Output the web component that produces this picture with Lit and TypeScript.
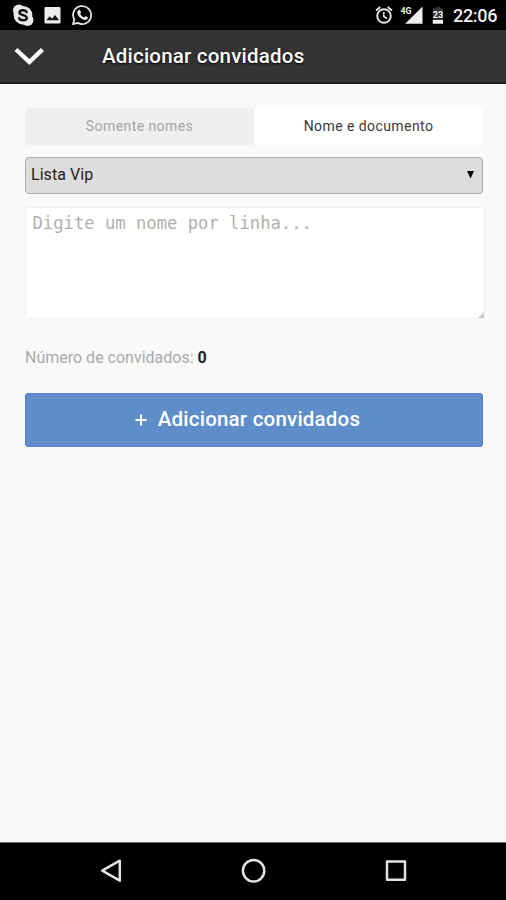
import { LitElement, html, css, svg } from "lit";
import { customElement, state } from "lit/decorators.js";
import { classMap } from "lit/directives/class-map.js";

@customElement("status-bar")
class StatusBar extends LitElement {
  static styles = css`
    :host { display: flex; height: 30px; box-sizing: border-box; background: #000; color: #eee; align-items: center; padding: 0 9px 0 12px; font-family: Roboto, sans-serif; }
    svg { display: block; flex: none; }
    .skype { margin-right: 10px; }
    .photo { margin-right: 11px; }
    .fill { flex: 1; }
    .alarm { margin-right: 7px; }
    .signal { margin-right: 9px; }
    .battery { margin-right: 9px; }
    .net { font: 700 9px Roboto, sans-serif; }
    .level { font: 700 9px Roboto, sans-serif; }
    .time { font-size: 18px; font-weight: 500; line-height: 30px; width: 44px; letter-spacing: -0.3px; white-space: nowrap; padding-top: 1px; }
  `;
  render() {
    return html`
      <svg class="skype" width="22" height="24" viewBox="0 0 22 24">
        <circle cx="7" cy="7.5" r="6" fill="#e8e8e8" /><circle cx="15.5" cy="17" r="6" fill="#e8e8e8" />
        <circle cx="11" cy="12.2" r="9.3" fill="#e8e8e8" />
        <path d="M14.6 9.2C13.8 6.6 7.5 6.5 7.5 9.5C7.5 12.7 14.8 11.6 14.8 15C14.8 18.1 8 18 7.2 15.2" fill="none" stroke="#111" stroke-width="2.4" stroke-linecap="round" />
      </svg>
      <svg class="photo" width="17" height="24" viewBox="0 0 17 24">
        <rect x="0.5" y="4" width="16" height="16.5" rx="1.2" fill="#eee" />
        <path d="M2.5 17.3L5.6 13.3L8 15.8L11 12L15 17.3Z" fill="#111" />
      </svg>
      <svg width="21" height="24" viewBox="0 0 21 24">
        <path d="M1 21.2L2.3 16.5A9 9 0 1 1 5.7 19.9Z" fill="none" stroke="#e4e4e4" stroke-width="1.8" stroke-linejoin="round" />
        <path d="M6.1 7.4C7.1 6.5 8 6.8 8.4 7.7L9 9.3C9.1 9.8 8.8 10.2 8.2 10.8C9 12.5 10.2 13.7 12 14.4L13.1 13.2C13.5 12.9 16 14 16 14.5C16 16.5 13.7 17.4 11.8 16.8C8.6 15.8 6.5 13.8 5.5 11C5 9.5 5.2 8.2 6.1 7.4Z" fill="#e8e8e8" />
      </svg>
      <div class="fill"></div>
      <svg class="alarm" width="18" height="24" viewBox="0 0 18 24">
        <circle cx="9" cy="13" r="6.8" fill="none" stroke="#e4e4e4" stroke-width="1.9" />
        <path d="M1 7.4L5.3 3.9M17 7.4L12.7 3.9" stroke="#e4e4e4" stroke-width="1.9" />
        <path d="M8.8 9V13.5L12 15.5" fill="none" stroke="#e4e4e4" stroke-width="1.5" />
      </svg>
      <svg class="signal" width="23" height="24" viewBox="0 0 23 24">
        <path d="M22.5 3.5V20.7H5.2Z" fill="#eee" />
        <text class="net" x="0.5" y="10.5" textLength="11" lengthAdjust="spacingAndGlyphs" fill="#eee" stroke="#000" stroke-width="2" paint-order="stroke">4G</text>
      </svg>
      <svg class="battery" width="12" height="24" viewBox="0 0 12 24">
        <path d="M3.6 3.8H8.4V5.2H11V20.5H0.8V5.2H3.6Z" fill="#333" />
        <rect x="0.8" y="17" width="10.2" height="3.7" fill="#f2f2f2" />
        <text class="level" x="0.7" y="15.4" textLength="10.4" lengthAdjust="spacingAndGlyphs" fill="#f4f4f4">23</text>
      </svg>
      <span class="time">22:06</span>
    `;
  }
}

@customElement("nav-bar")
class NavBar extends LitElement {
  static styles = css`
    :host { display: flex; justify-content: space-between; height: 58px; box-sizing: border-box; padding: 15px 97px 0 99px; background: #000; border-top: 1px solid #6a6a6a; }
    svg { display: block; overflow: visible; }
  `;
  private shapes = [
    svg`<path d="M3.2 12.7L20.8 2.7V22.7Z" />`,
    svg`<circle cx="11.6" cy="12.8" r="10.7" />`,
    svg`<rect x="3" y="3.5" width="18" height="18.3" />`,
  ];
  render() {
    return this.shapes.map((s) => html`<svg width="25" height="25" viewBox="0 0 25 25" fill="none" stroke="#e2e2e2" stroke-width="2.5" stroke-linejoin="round">${s}</svg>`);
  }
}

@customElement("app-root")
class AppRoot extends LitElement {
  static styles = css`
    :host { display: flex; flex-direction: column; height: 900px; background: #f9f9f9; font-family: Roboto, sans-serif; overflow: hidden; }
    header { display: flex; align-items: center; height: 54px; box-sizing: border-box; border-bottom: 2px solid #1c1c1c; background: #333; padding-left: 13px; color: #fff; }
    header svg { display: block; margin-right: 57px; }
    h1 { margin: 0; font-size: 20.5px; font-weight: 500; letter-spacing: 0.21px; line-height: 52px; white-space: nowrap; text-shadow: 0 1px 2px #000; }
    main { flex: 1; display: flex; flex-direction: column; padding: 24px 23px 0 25px; }
    .tabs { display: flex; height: 37px; border-radius: 4px; overflow: hidden; margin-bottom: 12px; flex: none; }
    .tab { flex: 1; border: 0; padding: 0 0 2px; margin: 0; background: #efefef; color: #a5a5a5; font: 400 14px Roboto, sans-serif; letter-spacing: 0.43px; }
    .tab.active { background: #fff; color: #3a3a3a; }
    .select { display: flex; align-items: center; justify-content: space-between; height: 37px; box-sizing: border-box; border: 1px solid #aaa; border-radius: 4px; background: #ddd; color: #222; padding: 0 7px 2px 5px; font-size: 16px; letter-spacing: 0.05px; margin-bottom: 13px; }
    .box { position: relative; width: 460px; height: 112px; box-sizing: border-box; border: 1px solid #f1f1f1; background: #fff; padding: 4px 6.5px; color: #b0b0b0; font: 17.2px/22px "DejaVu Sans Mono", monospace; white-space: nowrap; }
    .grip { position: absolute; right: 0; bottom: 0; display: block; }
    .count { margin-top: 29px; color: #aaa; font-size: 16px; line-height: 20px; white-space: nowrap; }
    .count b { color: #222; font-weight: 700; }
    .submit { display: flex; align-items: center; justify-content: center; gap: 11px; height: 54px; margin-top: 25px; box-sizing: border-box; border: 1px solid #4f83c3; border-radius: 3px; background: #5e8dca; color: #fff; padding: 0 13px 2px 0; font: 500 20.5px Roboto, sans-serif; letter-spacing: 0.21px; }
    .submit svg { display: block; margin-top: 2px; }
  `;
  static tabs = ["Somente nomes", "Nome e documento"];
  @state() selected = 1;
  render() {
    return html`
      <status-bar></status-bar>
      <header>
        <svg width="32" height="24" viewBox="0 0 32 24"><path d="M3 5.5L16.3 18L29.5 5.5" fill="none" stroke="#fff" stroke-width="4.4" /></svg>
        <h1>Adicionar convidados</h1>
      </header>
      <main>
        <div class="tabs">
          ${AppRoot.tabs.map((t, i) => html`<button class=${classMap({ tab: true, active: i === this.selected })} @click=${() => (this.selected = i)}>${t}</button>`)}
        </div>
        <div class="select">
          <span>Lista Vip</span>
          <svg width="9" height="9" viewBox="0 0 9 9"><path d="M1 1H8L4.5 8.5Z" fill="#000" /></svg>
        </div>
        <div class="box">
          Digite um nome por linha...
          <svg class="grip" width="6" height="6" viewBox="0 0 6 6"><path d="M6 0V6H0Z" fill="#ccc" /></svg>
        </div>
        <div class="count">Número de convidados: <b>0</b></div>
        <button class="submit">
          <svg width="12" height="12" viewBox="0 0 12 12"><path d="M6 0.5V11.5M0.5 6H11.5" stroke="#fff" stroke-width="2" /></svg>
          <span>Adicionar convidados</span>
        </button>
      </main>
      <nav-bar></nav-bar>
    `;
  }
}
